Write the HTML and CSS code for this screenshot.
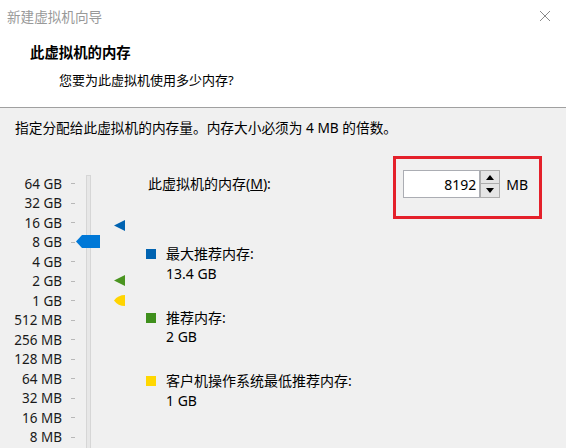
FILE: index.html
```html
<!DOCTYPE html>
<html lang="zh-CN">
<head>
  <meta charset="UTF-8" />
  <title>新建虚拟机向导</title>
  <link rel="stylesheet" href="styles.css">
</head>
<body>
  <div class="dialog">
    <div class="top">
      <div class="titlebar">
        <span class="title">新建虚拟机向导</span>
        <svg class="close" width="12" height="12" viewBox="0 0 12 12">
          <path d="M1 1 L11 11 M11 1 L1 11" stroke="#8a8a8a" stroke-width="1" fill="none"/>
        </svg>
      </div>
      <div class="page-head">
        <h1>此虚拟机的内存</h1>
        <p>您要为此虚拟机使用多少内存?</p>
      </div>
    </div>

    <div class="body">
      <p class="hint">指定分配给此虚拟机的内存量。内存大小必须为 4 MB 的倍数。</p>

      <div class="main">
        <div class="scale">
          <ul class="ticks">
            <li><span>64 GB</span><i></i></li>
            <li><span>32 GB</span><i></i></li>
            <li><span>16 GB</span><i></i></li>
            <li><span>8 GB</span><i></i></li>
            <li><span>4 GB</span><i></i></li>
            <li><span>2 GB</span><i></i></li>
            <li><span>1 GB</span><i></i></li>
            <li><span>512 MB</span><i></i></li>
            <li><span>256 MB</span><i></i></li>
            <li><span>128 MB</span><i></i></li>
            <li><span>64 MB</span><i></i></li>
            <li><span>32 MB</span><i></i></li>
            <li><span>16 MB</span><i></i></li>
            <li><span>8 MB</span><i></i></li>
          </ul>
          <div class="track"></div>
          <svg class="thumb" width="24" height="13" viewBox="0 0 24 13">
            <path d="M0 6.5 L6 0 H24 V13 H6 Z" fill="#0078d7"/>
          </svg>
          <svg class="marker max" width="11" height="11" viewBox="0 0 11 11">
            <path d="M0 5.5 L11 0 V11 Z" fill="#0063b1"/>
          </svg>
          <svg class="marker rec" width="11" height="11" viewBox="0 0 11 11">
            <path d="M0 5.5 L11 0 V11 Z" fill="#4a9420"/>
          </svg>
          <svg class="marker min" width="11" height="11" viewBox="0 0 11 11">
            <path d="M0 5.5 Q4 0 11 0 V11 Q4 11 0 5.5 Z" fill="#ffd400"/>
          </svg>
        </div>

        <div class="panel">
          <div class="mem-row">
            <label for="mem">此虚拟机的内存(<u>M</u>):</label>
            <div class="highlight">
              <div class="spinner">
                <input id="mem" type="text" value="8192" />
                <div class="spin-btns">
                  <button class="up"><svg width="8" height="5" viewBox="0 0 8 5"><path d="M0 5 L4 0 L8 5 Z" fill="#000"/></svg></button>
                  <button class="down"><svg width="8" height="5" viewBox="0 0 8 5"><path d="M0 0 L4 5 L8 0 Z" fill="#000"/></svg></button>
                </div>
                <span class="unit">MB</span>
              </div>
            </div>
          </div>

          <ul class="legend">
            <li><b class="sq blue"></b><div><div>最大推荐内存:</div><div>13.4 GB</div></div></li>
            <li><b class="sq green"></b><div><div>推荐内存:</div><div>2 GB</div></div></li>
            <li><b class="sq yellow"></b><div><div>客户机操作系统最低推荐内存:</div><div>1 GB</div></div></li>
          </ul>
        </div>
      </div>
    </div>
  </div>
</body>
</html>
```

FILE: styles.css
```css
html, body {
  margin: 0;
  padding: 0;
}
body {
  width: 566px;
  height: 448px;
  overflow: hidden;
  background: #f0f0f0;
  font-family: "Noto Sans", "Noto Sans CJK SC", sans-serif;
  font-size: 14px;
  color: #000;
}
.top {
  background: #fff;
  border-bottom: 1px solid #a0a0a0;
}
.titlebar {
  height: 32px;
  display: flex;
  align-items: center;
  justify-content: space-between;
  padding: 0 15px 0 7px;
}
.title {
  font-size: 13.6px;
  color: #999;
}
.page-head {
  padding: 11px 0 17px 30px;
}
.page-head h1 {
  margin: 0;
  font-size: 14.4px;
  line-height: 20px;
  font-weight: bold;
}
.page-head p {
  margin: 7px 0 0 29px;
  font-size: 13px;
  line-height: 20px;
}
.hint {
  margin: 0;
  padding: 10px 0 0 15px;
  font-size: 13.7px;
  line-height: 20px;
}
.main {
  display: flex;
  margin-top: 18px;
}
.scale {
  position: relative;
  width: 146px;
  flex: none;
  height: 292px;
}
.ticks {
  list-style: none;
  margin: 18px 0 0;
  padding: 0;
}
.ticks li {
  display: flex;
  align-items: center;
  height: 19.5px;
}
.ticks span {
  width: 62px;
  text-align: right;
  white-space: nowrap;
  color: #1a1a1a;
  font-size: 13.5px;
}
.ticks i {
  width: 4px;
  height: 1px;
  background: #b8b8b8;
  margin-left: 9px;
}
.track {
  position: absolute;
  left: 86px;
  top: 19px;
  width: 3px;
  bottom: -4px;
  background: #e7e7e7;
  border: 1px solid #d6d6d6;
}
.thumb {
  position: absolute;
  left: 76px;
  top: 79px;
}
.marker {
  position: absolute;
  left: 114px;
}
.marker.max { top: 64px; }
.marker.rec { top: 119px; }
.marker.min { top: 139px; }
.panel {
  flex: 1;
  padding-right: 24px;
}
.mem-row {
  display: flex;
  justify-content: space-between;
  align-items: flex-start;
}
.mem-row label {
  margin: 18px 0 0 2px;
  line-height: 20px;
}
.highlight {
  border: 3px solid #e4202a;
  padding: 11px 11px 18px 7px;
}
.spinner {
  display: flex;
  align-items: center;
}
.spinner input {
  width: 77px;
  height: 28px;
  box-sizing: border-box;
  border: 1px solid #abadb3;
  background: #fff;
  text-align: right;
  font: inherit;
  font-size: 14px;
  padding: 0 3px 0 0;
  margin: 0;
  outline: none;
}
.spin-btns {
  display: flex;
  flex-direction: column;
  height: 28px;
}
.spin-btns button {
  width: 20px;
  height: 14px;
  box-sizing: border-box;
  border: 1px solid #adadad;
  background: #e5e5e5;
  padding: 0;
  margin: 0;
  display: flex;
  align-items: center;
  justify-content: center;
}
.spin-btns .down {
  border-top: none;
}
.unit {
  margin-left: 6px;
}
.legend {
  list-style: none;
  margin: 25px 0 0;
  padding: 0;
  display: flex;
  flex-direction: column;
  gap: 24.5px;
}
.legend li {
  display: flex;
  align-items: flex-start;
  line-height: 19.5px;
}
.sq {
  width: 10px;
  height: 10px;
  margin: 5px 10px 0 0;
  flex: none;
}
.sq.blue { background: #0063b1; }
.sq.green { background: #3f8f1c; }
.sq.yellow { background: #ffd700; }
```
